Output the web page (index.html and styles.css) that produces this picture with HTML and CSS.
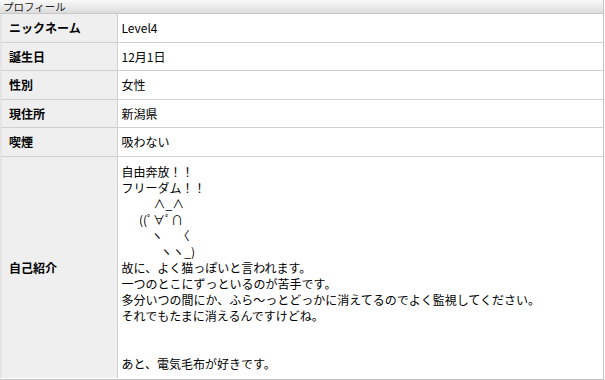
FILE: index.html
```html
<!DOCTYPE html>
<html lang="ja">
<head>
    <meta charset="UTF-8">
    <title>プロフィール</title>
    <link rel="stylesheet" href="styles.css">
</head>
<body>
    <div class="profile">
        <div class="profile-title">プロフィール</div>
        <table class="profile-table">
            <tr>
                <th>ニックネーム</th>
                <td>Level4</td>
            </tr>
            <tr>
                <th>誕生日</th>
                <td>12月1日</td>
            </tr>
            <tr>
                <th>性別</th>
                <td>女性</td>
            </tr>
            <tr>
                <th>現住所</th>
                <td>新潟県</td>
            </tr>
            <tr>
                <th>喫煙</th>
                <td>吸わない</td>
            </tr>
            <tr class="intro">
                <th>自己紹介</th>
                <td><div class="intro-text">自由奔放！！
フリーダム！！
　　   ∧_∧
　  ((ﾟ∀ﾟ∩
　　  ヽ　 〈
　　　 ヽヽ_)
故に、よく猫っぽいと言われます。
一つのとこにずっといるのが苦手です。
多分いつの間にか、ふら～っとどっかに消えてるのでよく監視してください。
それでもたまに消えるんですけどね。


あと、電気毛布が好きです。</div></td>
            </tr>
        </table>
    </div>
</body>
</html>
```

FILE: styles.css
```css
body {
    margin: 0;
    background: #fff;
    font-family: "Noto Sans CJK JP", "Liberation Sans", sans-serif;
    font-size: 12px;
    color: #000;
}
.profile {
    width: 604px;
    height: 380px;
    border-right: 1px solid #c4c4c4;
    border-bottom: 1px solid #c4c4c4;
    box-sizing: border-box;
}
.profile-title {
    height: 13px;
    line-height: 13px;
    padding-left: 3px;
    font-size: 10.5px;
    background: linear-gradient(#fafafa, #dcdcdc);
    border-bottom: 1px solid #c8c8c8;
    color: #222;
}
.profile-table {
    width: 100%;
    border-collapse: collapse;
}
.profile-table th,
.profile-table td {
    border-bottom: 1px solid #d0d0d0;
    height: 27.5px;
    padding: 0;
    vertical-align: middle;
}
.profile-table th {
    width: 116px;
    padding-left: 7px;
    text-align: left;
    font-weight: bold;
    background: #efefef;
    border-right: 1px solid #d0d0d0;
    border-left: 2px solid #e4e4e4;
    box-sizing: border-box;
}
.profile-table td {
    padding-left: 4px;
}
.profile-table tr.intro th,
.profile-table tr.intro td {
    height: 220px;
    border-bottom: none;
}
.intro-text {
    white-space: pre;
    line-height: 16px;
    padding: 7px 0 6px;
}
```
